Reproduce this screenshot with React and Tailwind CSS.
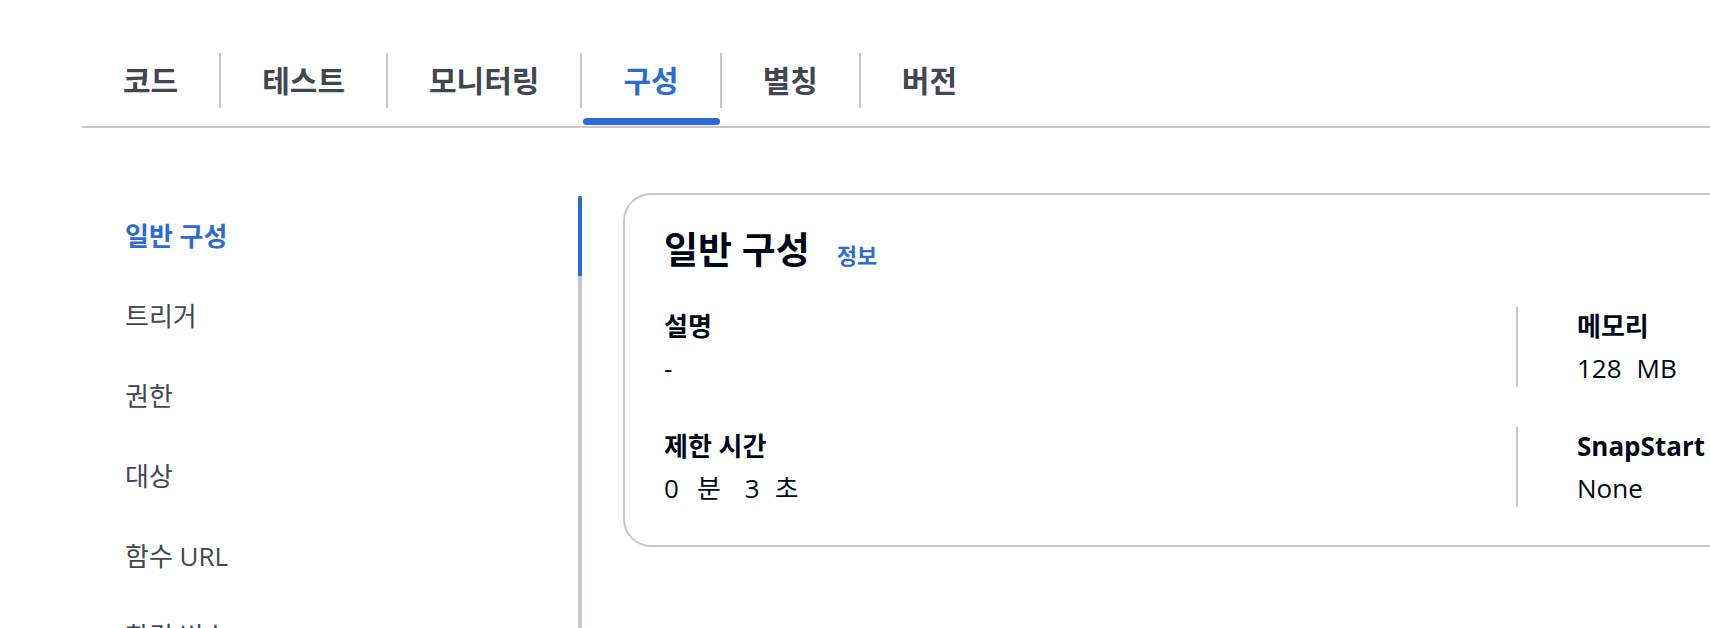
import React from 'react';

const tabs = ['코드', '테스트', '모니터링', '구성', '별칭', '버전'];
const navItems = ['일반 구성', '트리거', '권한', '대상', '함수 URL', '환경 변수', '태그'];

const KeyValue = ({label, children, divider}) => (
  <div className={divider ? 'border-l-2 border-[#c6c6cd] pl-[59px]' : ''}>
    <div className="text-[26px] font-bold leading-[38px] text-[#000716]">{label}</div>
    <div className="mt-[4px] text-[26px] leading-[38px] text-[#000716]">{children}</div>
  </div>
);

const App = () => {
  return (
    <div className="h-[628px] w-[1710px] overflow-hidden bg-white font-['Open_Sans','Noto_Sans_CJK_KR',sans-serif]">
      <div className="ml-[82px] pt-[53px]">
        <div className="flex border-b-2 border-[#c6c6cd]">
          {tabs.map((tab, i) => (
            <React.Fragment key={tab}>
              {i > 0 && <div className="h-[55px] w-[2px] shrink-0 bg-[#c6c6cd]"></div>}
              <div className="relative h-[73px] px-[41px]">
                <span
                  className={`flex h-[55px] items-center text-[30px] font-bold ${
                    i === 3 ? 'text-[#2e6ad6]' : 'text-[#424650]'
                  }`}
                >
                  {tab}
                </span>
                {i === 3 && (
                  <div className="absolute bottom-[1px] left-[1px] right-0 h-[7px] rounded-full bg-[#2e6ad6]"></div>
                )}
              </div>
            </React.Fragment>
          ))}
        </div>
      </div>

      <div className="mt-[65px] flex">
        <div className="mt-[3px] flex">
          <ul className="w-[578px] pl-[125px]">
            {navItems.map((item, i) => (
              <li
                key={item}
                className={`flex h-[80px] items-center text-[26px] ${
                  i === 0 ? 'font-bold text-[#2e6ad6]' : 'text-[#424650]'
                }`}
              >
                {item}
              </li>
            ))}
          </ul>
          <div className="relative w-[4px] bg-[#c6c6cd]">
            <div className="h-[80px] w-[4px] rounded-t-full bg-[#2e6ad6]"></div>
          </div>
        </div>

        <div className="ml-[41px] h-[354px] w-[1500px] shrink-0 rounded-[28px] border-2 border-[#c6c6cd] pl-[39px] pt-[34px]">
          <div className="flex items-baseline">
            <h2 className="text-[37px] font-bold leading-[42px] text-[#000716]">일반 구성</h2>
            <a className="ml-[27px] text-[22px] font-bold text-[#2e6ad6]">정보</a>
          </div>
          <div className="mt-[35px] grid grid-cols-[852px_852px] gap-y-[40px]">
            <KeyValue label="설명">-</KeyValue>
            <KeyValue label="메모리" divider>
              128<span className="ml-[15px]">MB</span>
            </KeyValue>
            <KeyValue label="제한 시간">
              0<span className="ml-[18px]">분</span>
              <span className="ml-[24px]">3</span>
              <span className="ml-[15px]">초</span>
            </KeyValue>
            <KeyValue label="SnapStart" divider>
              None
            </KeyValue>
          </div>
        </div>
      </div>
    </div>
  );
};

export default App;
